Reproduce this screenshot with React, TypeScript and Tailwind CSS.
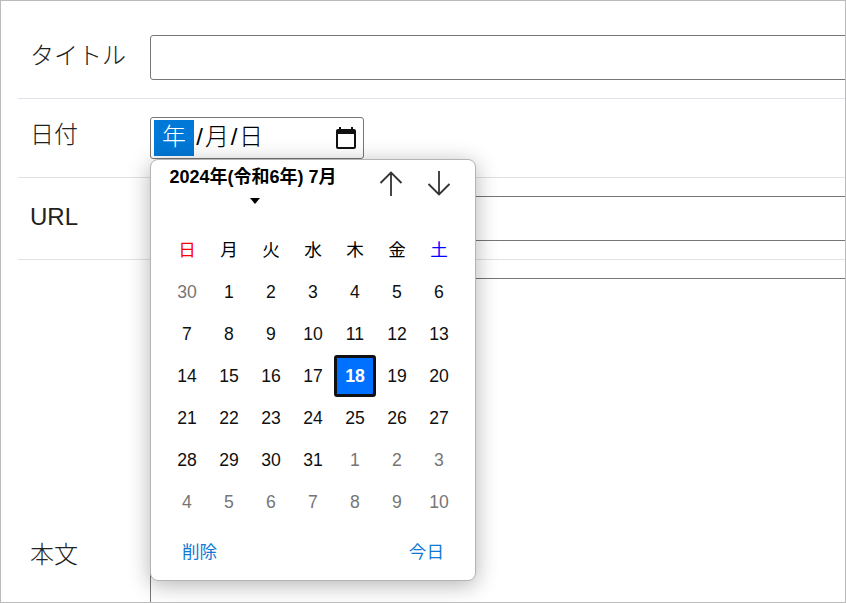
import React from 'react';

const sans = "font-['Liberation_Sans','Noto_Sans_CJK_JP',sans-serif]";

const weekDays = [
  { label: '日', color: 'text-[#ff0000]' },
  { label: '月', color: 'text-black' },
  { label: '火', color: 'text-black' },
  { label: '水', color: 'text-black' },
  { label: '木', color: 'text-black' },
  { label: '金', color: 'text-black' },
  { label: '土', color: 'text-[#0000ff]' },
];

const days = [
  30, 1, 2, 3, 4, 5, 6,
  7, 8, 9, 10, 11, 12, 13,
  14, 15, 16, 17, 18, 19, 20,
  21, 22, 23, 24, 25, 26, 27,
  28, 29, 30, 31, 1, 2, 3,
  4, 5, 6, 7, 8, 9, 10,
];

const Arrow: React.FC<{ down?: boolean }> = ({ down }) => (
  <svg width="24" height="25" viewBox="0 0 24 25" fill="none" stroke="#333" strokeWidth="1.8" className={down ? 'rotate-180' : ''}>
    <path d="M12 25V1.5M1.5 12L12 1.5 22.5 12" />
  </svg>
);

const DatePopup: React.FC = () => (
  <div className="absolute left-[149px] top-[158px] w-[326px] h-[422px] bg-white border border-[#b4b4b4] rounded-lg shadow-[0_4px_22px_rgba(0,0,0,0.3)]">
    <div className="flex justify-between pl-[18px] pr-[24px] h-[69px]">
      <div className="flex flex-col items-center w-[168px] pt-[6px]">
        <div className="text-[18px] leading-[22px] font-bold text-black whitespace-nowrap">2024年(令和6年) 7月</div>
        <svg width="10" height="6" viewBox="0 0 10 6" className="mt-[10px] ml-[4px]">
          <path d="M0 0h10L5 6z" fill="#000" />
        </svg>
      </div>
      <div className="flex gap-[24px] pt-[11px]">
        <Arrow />
        <Arrow down />
      </div>
    </div>
    <div className="grid grid-cols-7 auto-rows-[42px] px-[15px] text-[17.6px] text-center">
      {weekDays.map((d) => (
        <div key={d.label} className={`flex items-center justify-center ${d.color}`}>{d.label}</div>
      ))}
      {days.map((n, i) => {
        const isOther = i === 0 || i >= 32;
        const isToday = i === 18;
        return (
          <div
            key={i}
            className={
              isToday
                ? 'flex items-center justify-center bg-[#0071fe] border-[3px] border-[#101010] rounded-[3px] text-white font-bold'
                : isOther
                  ? 'flex items-center justify-center text-[#767676]'
                  : 'flex items-center justify-center text-[#101010]'
            }
          >
            {n}
          </div>
        );
      })}
    </div>
    <div className="flex justify-between px-[31px] pt-[17px] text-[17.6px] leading-[24px] text-[#0f7ad6]">
      <span>削除</span>
      <span>今日</span>
    </div>
  </div>
);

const App: React.FC = () => {
  return (
    <div className={`relative w-[846px] h-[603px] bg-white border border-[#bbbbbb] overflow-hidden ${sans}`}>
      <div className="pl-[17px] w-[1000px] text-[24px] text-[#222222]">
        <div className="flex items-start h-[98px] border-b border-[#e2e2ea] pt-[34px]">
          <label className="w-[132px] pl-[12px] leading-[42px] font-light">タイトル</label>
          <input className="w-[800px] h-[45px] border border-[#767676] rounded-[3px]" />
        </div>
        <div className="flex items-start h-[79px] border-b border-[#e2e2e2] pt-[18px]">
          <label className="w-[132px] pl-[12px] leading-[36px] font-light">日付</label>
          <div className="flex items-center w-[214px] h-[42px] border border-[#767676] rounded-[3px] pl-[3px] pr-[5px] text-black leading-[34px]">
            <span className="w-[40px] h-[36px] bg-[#0078d7] text-white text-center font-light">年</span>
            <span className="w-[11px] h-[36px] text-center">/</span>
            <span className="h-[36px] font-light">月</span>
            <span className="w-[10px] h-[36px] text-center">/</span>
            <span className="h-[36px] font-light">日</span>
            <svg width="24" height="24" viewBox="0 0 24 24" className="ml-auto" fill="#111">
              <path d="M20 3h-1V1h-2v2H7V1H5v2H4c-1.1 0-2 .9-2 2v16c0 1.1.9 2 2 2h16c1.1 0 2-.9 2-2V5c0-1.1-.9-2-2-2zm0 18H4V8h16v13z" />
            </svg>
          </div>
        </div>
        <div className="flex items-start h-[82px] border-b border-[#e2e2e2] pt-[18px]">
          <label className="w-[132px] pl-[12px] leading-[42px]">URL</label>
          <input className="w-[800px] h-[45px] border border-[#767676]" />
        </div>
        <div className="flex items-start pt-[18px]">
          <label className="w-[132px] pl-[12px] leading-[36px] mt-[259px] font-light">本文</label>
          <div className="w-[800px] h-[400px] border border-[#767676]" />
        </div>
      </div>
      <DatePopup />
    </div>
  );
};

export default App;
